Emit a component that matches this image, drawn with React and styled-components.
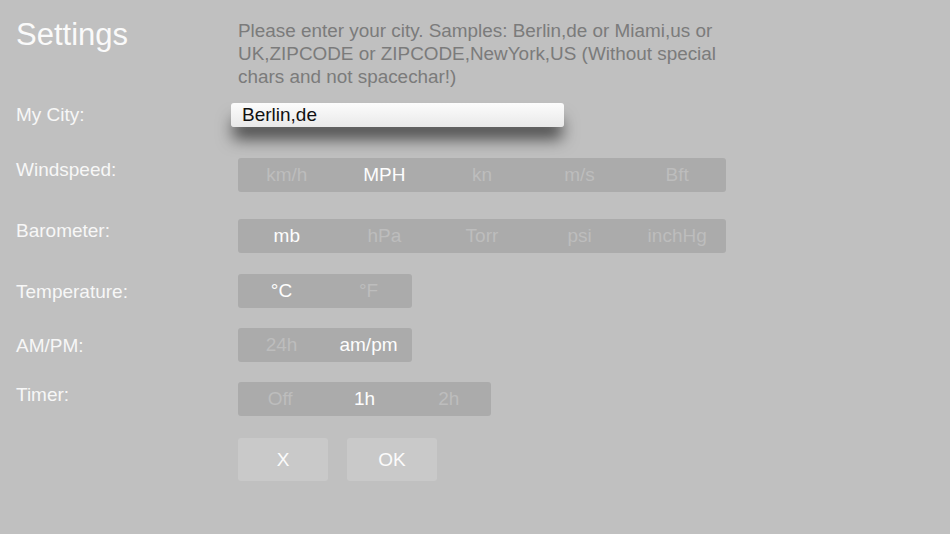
import styled, { createGlobalStyle } from 'styled-components';

const GlobalStyle = createGlobalStyle`
	html, body {
		margin: 0;
		padding: 0;
		background: #c0c0c0;
	}
	body {
		font-family: 'Liberation Sans', Arial, sans-serif;
	}
`;

const SETTINGS = [
	{ label: 'Windspeed:', options: ['km/h', 'MPH', 'kn', 'm/s', 'Bft'], active: 1, width: 488, gap: 31, offset: 1 },
	{ label: 'Barometer:', options: ['mb', 'hPa', 'Torr', 'psi', 'inchHg'], active: 0, width: 488, gap: 27, offset: 1 },
	{ label: 'Temperature:', options: ['°C', '°F'], active: 0, width: 174, gap: 21, offset: 7 },
	{ label: 'AM/PM:', options: ['24h', 'am/pm'], active: 1, width: 174, gap: 20, offset: 7 },
	{ label: 'Timer:', options: ['Off', '1h', '2h'], active: 1, width: 253, gap: 20, offset: 2 },
];

const Page = styled.div`
	width: 950px;
	height: 534px;
	overflow: hidden;
	background: #c0c0c0;
	padding: 19px 0 0 16px;
	box-sizing: border-box;
`;

const Header = styled.header`
	display: grid;
	grid-template-columns: 222px 492px;
`;

const Title = styled.h1`
	margin: 0;
	font-size: 31px;
	line-height: 31px;
	font-weight: 400;
	color: #fafafa;
`;

const Hint = styled.p`
	margin: 0;
	font-size: 18.9px;
	line-height: 23px;
	color: #7b7b7b;
`;

const Row = styled.div`
	display: grid;
	grid-template-columns: 222px auto;
	align-items: start;
	margin-top: ${({ $gap }) => $gap}px;
`;

const Label = styled.div`
	padding-top: ${({ $offset }) => $offset}px;
	font-size: 19px;
	line-height: 22px;
	color: #f7f7f7;
`;

const CityInput = styled.div`
	width: 333px;
	height: 24px;
	margin-left: -7px;
	padding-left: 11px;
	box-sizing: border-box;
	border-radius: 3px;
	background: linear-gradient(#fcfcfc, #e9e9e9);
	box-shadow: 0 14px 16px -2px rgba(0, 0, 0, 0.62);
	font-size: 19px;
	line-height: 24px;
	color: #111;
`;

const Segmented = styled.div`
	display: flex;
	width: ${({ $width }) => $width}px;
	height: 34px;
	border-radius: 3px;
	background: #ababab;
`;

const Segment = styled.div`
	flex: 1;
	display: flex;
	align-items: center;
	justify-content: center;
	font-size: 19px;
	color: ${({ $active }) => ($active ? '#fdfdfd' : '#bdbdbd')};
`;

const Actions = styled.div`
	display: flex;
	gap: 19px;
	margin: 22px 0 0 222px;
`;

const ActionButton = styled.div`
	width: 90px;
	height: 43px;
	display: flex;
	align-items: center;
	justify-content: center;
	border-radius: 3px;
	background: #c9c9c9;
	font-size: 19px;
	color: #fbfbfb;
`;

export default function App() {
	return (
		<Page>
			<GlobalStyle />
			<Header>
				<Title>Settings</Title>
				<Hint>
					Please enter your city. Samples: Berlin,de or Miami,us or UK,ZIPCODE or ZIPCODE,NewYork,US
					(Without special chars and not spacechar!)
				</Hint>
			</Header>

			<Row $gap={15}>
				<Label $offset={1}>My City:</Label>
				<CityInput>Berlin,de</CityInput>
			</Row>

			{SETTINGS.map(({ label, options, active, width, gap, offset }) => (
				<Row key={label} $gap={gap}>
					<Label $offset={offset}>{label}</Label>
					<Segmented $width={width}>
						{options.map((option, i) => (
							<Segment key={option} $active={i === active}>
								{option}
							</Segment>
						))}
					</Segmented>
				</Row>
			))}

			<Actions>
				<ActionButton>X</ActionButton>
				<ActionButton>OK</ActionButton>
			</Actions>
		</Page>
	);
}
